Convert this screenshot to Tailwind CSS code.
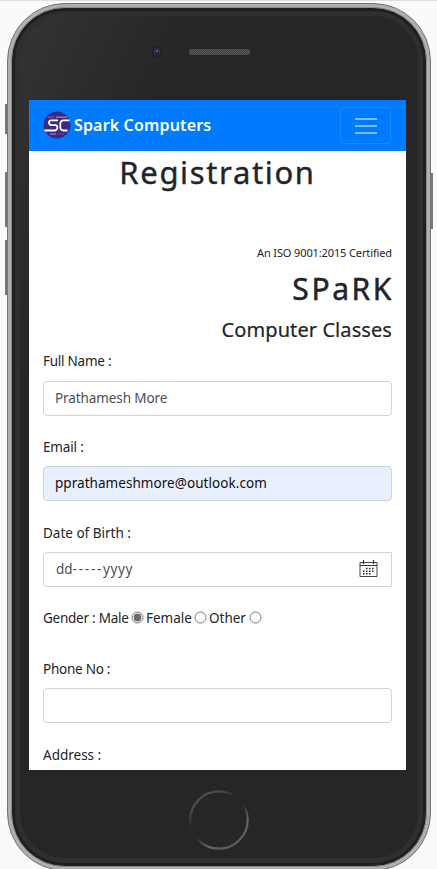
<!DOCTYPE html>
<html lang="en">
<head>
<meta charset="utf-8">
<title>Spark Computers – Registration</title>
<script src="https://cdn.jsdelivr.net/npm/@tailwindcss/browser@4"></script>
</head>
<body class="w-[437px] h-[869px] overflow-hidden bg-[#fafafa] font-['Noto_Sans',sans-serif] text-[#212529]">
<div class="relative h-[869px] overflow-hidden border-t border-[#dedede] pl-[7px] pt-[2px]">
  <!-- side buttons -->
  <div class="absolute left-[5px] top-[103px] h-[30px] w-[3px] bg-[#777]"></div>
  <div class="absolute left-[5px] top-[171px] h-[55px] w-[3px] bg-[#777]"></div>
  <div class="absolute left-[5px] top-[239px] h-[55px] w-[3px] bg-[#777]"></div>
  <div class="absolute left-[430px] top-[172px] h-[56px] w-[3px] bg-[#777]"></div>

  <!-- phone body -->
  <div class="relative h-[868px] w-[424px] rounded-[58px] border border-[#747474] bg-[#b0b0b0] p-[3px]">
    <div class="h-full rounded-[54px] border border-[#8c8c8c] bg-[#1f1f1f] p-[3px]">
      <div class="h-full rounded-[50px] border-[5px] border-[#2f2f2f] bg-[#262626] bg-[linear-gradient(115deg,#343434_0%,#262626_22%)] px-[9px]">
        <header class="relative h-[84px]">
          <svg class="absolute left-[121px] top-[29px]" width="14" height="14" viewBox="0 0 14 14"><circle cx="7" cy="7" r="6.5" fill="#222" stroke="#2d2d2d"/><circle cx="7" cy="7" r="3.2" fill="#42364f"/><circle cx="7" cy="7.5" r="2" fill="#1b1630"/><circle cx="7" cy="6.5" r="1" fill="#8573a8"/></svg>
          <svg class="absolute left-[160px] top-[33px]" width="61" height="7"><defs><pattern id="mesh" width="2" height="2" patternUnits="userSpaceOnUse"><rect width="2" height="2" fill="#3d3d3d"/><rect width="1" height="1" fill="#5c5c5c"/><rect x="1" y="1" width="1" height="1" fill="#5c5c5c"/></pattern></defs><rect width="61" height="6" rx="3" fill="url(#mesh)"/></svg>
        </header>

        <!-- screen -->
        <main class="h-[670px] w-[377px] overflow-hidden bg-white">
          <nav class="flex h-[51px] items-center bg-[#007bff] pl-[14px] pr-[14px]">
            <svg class="mb-px" width="28" height="28" viewBox="0 0 28 28"><circle cx="14" cy="14" r="13.5" fill="#3b2a86"/><g fill="none" stroke="#fff" stroke-width="1.8" stroke-linejoin="round"><path d="M15 9.300H8Q6 9.300 6 11.500T8 14.200H12.500Q14.500 14.200 14.300 16.700T12 19.500H1.500"/><path d="M26.500 9.300H20.500Q17.500 9.300 17.300 12.500V16Q17.300 19.500 20.500 19.500H24.500"/></g><path d="M4.500 6.200H11" stroke="#a35a68" stroke-width="1"/><path d="M13 6.200H24" stroke="#a9a0cc" stroke-width="1"/><path d="M7 23H13" stroke="#a99cd0"/><path d="M14 23H21" stroke="#8a4470"/></svg>
            <span class="ml-[3px] text-[16px] leading-[23px] pb-px font-semibold tracking-[0.15px] text-white whitespace-nowrap">Spark Computers</span>
            <span class="ml-auto mr-px flex h-[37px] w-[51px] flex-col items-center justify-center gap-[5px] rounded border border-[#1a88ff]">
              <i class="h-[2px] w-[22px] bg-[#80bdff]"></i><i class="h-[2px] w-[22px] bg-[#80bdff]"></i><i class="h-[2px] w-[22px] bg-[#80bdff]"></i>
            </span>
          </nav>
          <h1 class="h-[91px] text-center text-[31px] leading-[43px] font-normal tracking-[1.65px] [-webkit-text-stroke:0.4px_#212529]">Registration</h1>
          <section class="px-[14px] text-right">
            <p class="h-[24px] text-[11px] leading-[22px] tracking-[-0.12px]">An ISO 9001:2015 Certified</p>
            <h2 class="h-[44px] text-[30px] leading-[46px] font-normal tracking-[2.6px] mr-[-2px] [-webkit-text-stroke:0.5px_#212529]">SPaRK</h2>
            <h3 class="h-[40px] text-[20px] leading-[40px] font-normal tracking-[0.08px] [-webkit-text-stroke:0.2px_#212529]">Computer Classes</h3>
          </section>
          <form class="px-[14px] text-[13.5px]">
            <div class="h-[86px]">
              <label class="block h-[31px] leading-[22px] tracking-[-0.25px]">Full Name :</label>
              <div class="flex h-[35px] items-center rounded border border-[#ced4da] px-[11px] tracking-[-0.1px] text-[#495057]">Prathamesh More</div>
            </div>
            <div class="h-[86px]">
              <label class="block h-[30px] leading-[22px] tracking-[-0.15px]">Email :</label>
              <div class="flex h-[35px] items-center rounded border border-[#ced4da] bg-[#e8f0fe] px-[11px] tracking-[0.05px] text-[#111]">pprathameshmore@outlook.com</div>
            </div>
            <div class="h-[85px]">
              <label class="block h-[30px] leading-[22px]">Date of Birth :</label>
              <div class="flex h-[35px] items-center justify-between rounded-l border border-[#d2d4d6] pl-[12px] pr-[13px] text-[#495057]"><span>dd<span class="tracking-[1.75px]">-----</span><span class="tracking-[0.6px]">yyyy</span></span>
                <svg class="mb-[2px]" width="19" height="18" viewBox="0 0 19 18"><path d="M1 2.500H18V16.500H1Z" fill="none" stroke="#444"/><path d="M1 5.500H18M4.500 0V4M14.500 0V4" stroke="#333" stroke-width="1.200"/><path d="M7 8.500H16M4 11.200H16M4 13.800H13" stroke="#222" stroke-width="1.400" stroke-dasharray="1.500 1.500"/></svg>
              </div>
            </div>
            <div class="flex h-[51px] items-start leading-[22px] whitespace-pre">
              <span class="w-[88px] tracking-[-0.25px]">Gender : Male </span><svg class="mt-[4px]" width="13" height="13"><circle cx="6.500" cy="6.500" r="5.500" fill="#fff" stroke="#767676"/><circle cx="6.500" cy="6.500" r="3.900" fill="#6b6b6b"/></svg><span class="ml-[2px] w-[46px]">Female</span><svg class="ml-[2px] mt-[4px]" width="13" height="13"><circle cx="6.500" cy="6.500" r="5.500" fill="#fff" stroke="#767676"/></svg><span class="ml-[2px] w-[37.5px]">Other</span><svg class="ml-[2px] mt-[4px]" width="13" height="13"><circle cx="6.500" cy="6.500" r="5.500" fill="#fff" stroke="#767676"/></svg>
            </div>
            <div class="h-[86px]">
              <label class="block h-[30px] leading-[22px] tracking-[-0.25px]">Phone No :</label>
              <div class="h-[35px] rounded border border-[#ced4da]"></div>
            </div>
            <label class="block leading-[22px]">Address :</label>
          </form>
        </main>

        <footer class="flex justify-center pt-[20px]">
          <svg width="60" height="60" viewBox="0 0 60 60"><defs><linearGradient id="tl" x1="0.1" y1="0" x2=".8" y2="1"><stop offset="0" stop-color="#555"/><stop offset=".2" stop-color="#484848"/><stop offset=".38" stop-color="#272727"/><stop offset=".55" stop-color="#272727"/><stop offset=".75" stop-color="#666"/><stop offset="1" stop-color="#5c5c5c"/></linearGradient></defs><circle cx="30" cy="30" r="28.700" fill="none" stroke="url(#tl)" stroke-width="2.200"/></svg>
        </footer>
      </div>
    </div>
  </div>
</div>
</body>
</html>
